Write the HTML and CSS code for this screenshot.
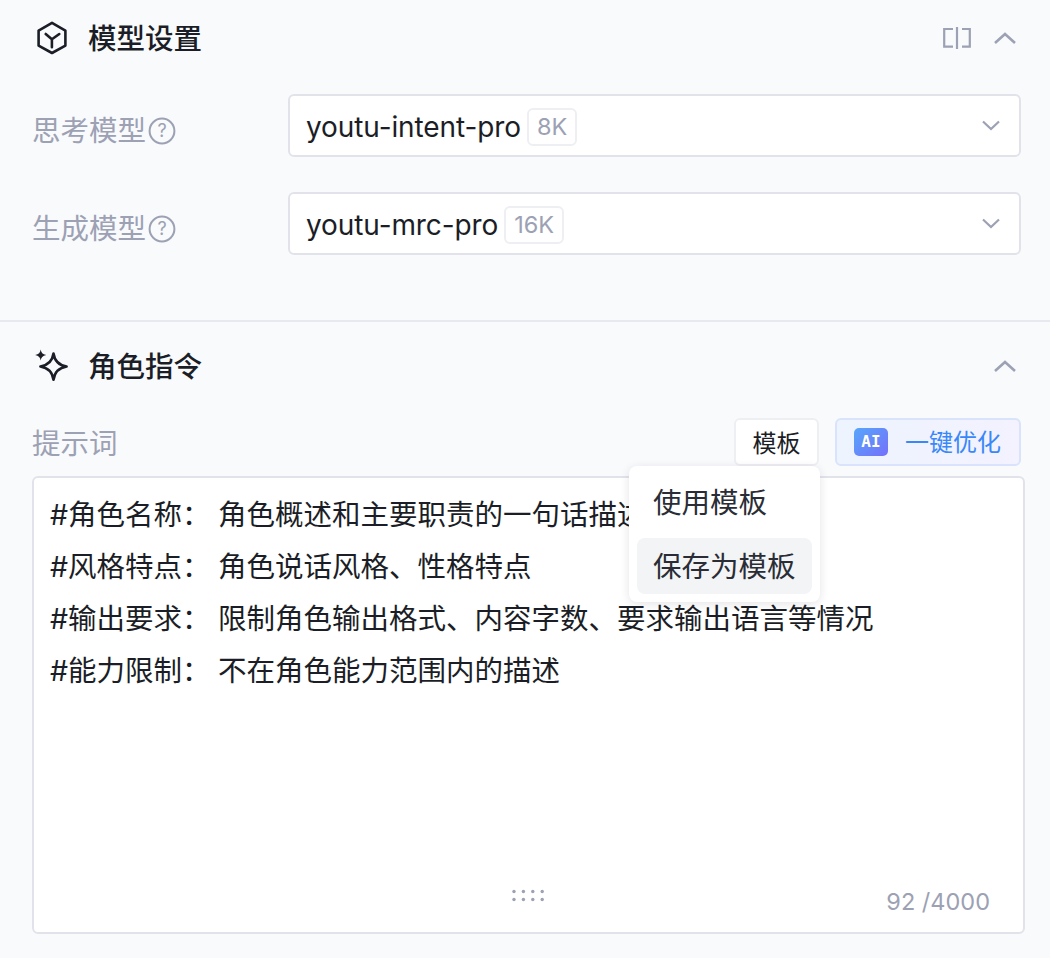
FILE: index.html
```html
<!DOCTYPE html>
<html lang="zh-CN">
<head>
<meta charset="utf-8">
<title>模型设置</title>
<link rel="stylesheet" href="styles.css">
</head>
<body>
<main class="page">
  <section class="model-section">
    <header class="section-head">
      <svg class="head-icon" viewBox="0 0 32 36" width="32" height="36" fill="none" stroke="#1b1e26" stroke-width="2.6" stroke-linejoin="round" stroke-linecap="round"><path d="M17 1.9 L30.4 9.6 V24.6 L17 32 L3.6 24.6 V9.6 Z"/><path d="M10.7 13 L16.9 18.3 L24.3 13 M16.9 18.3 V26.3"/></svg>
      <h2 class="section-title">模型设置</h2>
      <div class="head-actions">
        <svg class="split-icon" viewBox="0 0 28 24" width="28" height="24" fill="none" stroke="#9ca1b3" stroke-width="2.2"><path d="M10 2 H1.2 V19.7 H10 M19 2 H26.8 V19.7 H19"/><path d="M14 0 V22"/></svg>
        <svg class="chev-up" viewBox="0 0 24 14" width="24" height="14" fill="none" stroke="#9ca1b3" stroke-width="2.6"><path d="M2 11 L12 2 L22 11"/></svg>
      </div>
    </header>
    <div class="field-row">
      <div class="field-label"><span>思考模型</span><svg class="help" viewBox="0 0 28 28" width="28" height="28" fill="none"><circle cx="14" cy="14" r="12.4" stroke="#9ca1b3" stroke-width="2"/><text x="14" y="20" text-anchor="middle" class="help-mark">?</text></svg></div>
      <div class="select"><span class="select-value">youtu-intent-pro</span><span class="tag">8K</span><svg class="chev-down" viewBox="0 0 18 11" width="18" height="11" fill="none" stroke="#9ca1b3" stroke-width="2.2"><path d="M1 1.5 L9 9 L17 1.5"/></svg></div>
    </div>
    <div class="field-row">
      <div class="field-label"><span>生成模型</span><svg class="help" viewBox="0 0 28 28" width="28" height="28" fill="none"><circle cx="14" cy="14" r="12.4" stroke="#9ca1b3" stroke-width="2"/><text x="14" y="20" text-anchor="middle" class="help-mark">?</text></svg></div>
      <div class="select"><span class="select-value">youtu-mrc-pro</span><span class="tag">16K</span><svg class="chev-down" viewBox="0 0 18 11" width="18" height="11" fill="none" stroke="#9ca1b3" stroke-width="2.2"><path d="M1 1.5 L9 9 L17 1.5"/></svg></div>
    </div>
  </section>
  <section class="role-section">
    <header class="section-head">
      <svg class="head-icon star-icon" viewBox="0 0 32 36" width="32" height="36" fill="none"><path d="M18.5 4.5 C19.6 12.2 23.6 16.2 31.6 17.5 C23.6 18.8 19.6 22.8 18.5 30.8 C17.4 22.8 13.4 18.8 5.4 17.5 C13.4 16.2 17.4 12.2 18.5 4.5 Z" stroke="#1b1e26" stroke-width="2.6" stroke-linejoin="round"/><path d="M5.7 0.4 C6.1 3.6 7.6 5.2 11.2 6 C7.6 6.8 6.1 8.4 5.7 11.6 C5.3 8.4 3.8 6.8 0.2 6 C3.8 5.2 5.3 3.6 5.7 0.4 Z" fill="#1b1e26"/></svg>
      <h2 class="section-title">角色指令</h2>
      <div class="head-actions">
        <svg class="chev-up" viewBox="0 0 24 14" width="24" height="14" fill="none" stroke="#9ca1b3" stroke-width="2.6"><path d="M2 11 L12 2 L22 11"/></svg>
      </div>
    </header>
    <div class="prompt-bar">
      <span class="prompt-label">提示词</span>
      <div class="prompt-actions">
        <div class="template-wrap">
          <button class="btn-template" type="button">模板</button>
          <div class="menu">
            <div class="menu-item">使用模板</div>
            <div class="menu-item is-hover">保存为模板</div>
          </div>
        </div>
        <button class="btn-optimize" type="button"><span class="ai-badge">AI</span><span class="optimize-text">一键优化</span></button>
      </div>
    </div>
    <div class="editor">
      <p class="line"><span class="key">#角色名称：</span>角色概述和主要职责的一句话描述</p>
      <p class="line"><span class="key">#风格特点：</span>角色说话风格、性格特点</p>
      <p class="line"><span class="key">#输出要求：</span>限制角色输出格式、内容字数、要求输出语言等情况</p>
      <p class="line"><span class="key">#能力限制：</span>不在角色能力范围内的描述</p>
      <div class="editor-foot">
        <svg class="grip" viewBox="0 0 34 14" width="34" height="14" fill="#9ca1b3"><circle cx="2" cy="2.5" r="1.7"/><circle cx="11.4" cy="2.5" r="1.7"/><circle cx="20.8" cy="2.5" r="1.7"/><circle cx="30.2" cy="2.5" r="1.7"/><circle cx="2" cy="10.5" r="1.7"/><circle cx="11.4" cy="10.5" r="1.7"/><circle cx="20.8" cy="10.5" r="1.7"/><circle cx="30.2" cy="10.5" r="1.7"/></svg>
        <span class="count">92 /4000</span>
      </div>
    </div>
  </section>
</main>
</body>
</html>
```

FILE: styles.css
```css
* { box-sizing: border-box; }
html, body { margin: 0; padding: 0; }
body {
  width: 1050px;
  height: 958px;
  overflow: hidden;
  background: #f9fafc;
  color: #1b1e26;
  font-family: Inter, "Noto Sans CJK SC", sans-serif;
  font-size: 28px;
}
.page { display: flex; flex-direction: column; }
.model-section {
  height: 320px;
  padding: 17px 29px 0 32px;
  display: flex;
  flex-direction: column;
}
.role-section {
  border-top: 2px solid #e8e9ef;
  padding: 23px 25px 0 32px;
  display: flex;
  flex-direction: column;
}
.section-head {
  height: 44px;
  display: flex;
  align-items: center;
  gap: 21px;
  flex: none;
}
.head-icon { flex: none; margin-left: 3px; }
.star-icon { overflow: visible; }
.section-title {
  margin: 0;
  font-size: 28.5px;
  font-weight: 500;
  line-height: 44px;
}
.head-actions {
  margin-left: auto;
  margin-right: 4px;
  display: flex;
  align-items: center;
  gap: 22px;
}
.role-section .head-actions { margin-right: 8px; }
.field-row {
  display: flex;
  align-items: center;
  margin-top: 35px;
}
.section-head + .field-row { margin-top: 33px; }
.field-label {
  width: 256px;
  display: flex;
  align-items: center;
  color: #9ca1b3;
  font-size: 28.5px;
  line-height: 44px;
  padding-top: 10px;
  flex: none;
}
.help { margin-left: 2px; }
.select {
  flex: 1;
  height: 63px;
  background: #fff;
  border: 2px solid #e2e3ea;
  border-radius: 6px;
  padding: 2px 19px 0 16px;
  display: flex;
  align-items: center;
  gap: 6px;
}
.select-value { line-height: 40px; letter-spacing: -0.1px; }
.tag {
  height: 38px;
  padding: 0 8px;
  border: 2px solid #eeeff3;
  border-radius: 6px;
  color: #9ca1b3;
  font-size: 23.5px;
  line-height: 34px;
}
.chev-down { margin-left: auto; margin-top: -2px; }
.help-mark { font-size: 18px; fill: #9ca1b3; font-family: Inter, sans-serif; }
.prompt-bar {
  margin-top: 29px;
  height: 48px;
  display: flex;
  align-items: center;
  padding-right: 4px;
  flex: none;
}
.prompt-label { color: #9ca1b3; font-size: 28.5px; line-height: 48px; padding-top: 4px; }
.prompt-actions {
  margin-left: auto;
  display: flex;
  gap: 16px;
}
.template-wrap { position: relative; }
.btn-template, .btn-optimize {
  font: inherit;
  height: 48px;
  border-radius: 6px;
  padding: 0;
  cursor: pointer;
  font-size: 24px;
  line-height: 44px;
}
.btn-template {
  width: 85px;
  background: #fff;
  border: 2px solid #eeeff3;
  color: #1b1e26;
  padding-top: 2px;
}
.btn-optimize {
  width: 186px;
  background: linear-gradient(90deg, #edf4fe, #f3f2fe);
  border: 2px solid #d9e3fc;
  color: #3a88f8;
  display: flex;
  align-items: center;
  padding-left: 17px;
  gap: 17px;
}
.ai-badge {
  width: 34px;
  height: 28px;
  border-radius: 5px;
  background: linear-gradient(135deg, #57a6fa, #7470fb);
  color: #fff;
  font-family: "DejaVu Sans Mono", monospace;
  font-size: 16px;
  font-weight: 700;
  line-height: 28px;
  text-align: center;
}
.optimize-text { line-height: 44px; padding-top: 2px; }
.menu {
  position: absolute;
  top: 48px;
  left: -105px;
  width: 191px;
  height: 136px;
  background: #fff;
  border-radius: 8px;
  padding: 8px;
  box-shadow: 0 2px 10px rgba(30, 35, 60, 0.12);
  z-index: 2;
  display: flex;
  flex-direction: column;
  gap: 8px;
}
.menu-item {
  height: 56px;
  padding: 1px 16px 0;
  border-radius: 8px;
  font-size: 28.5px;
  line-height: 56px;
  white-space: nowrap;
  color: #2a2d35;
  flex: none;
}
.menu-item.is-hover { background: #f3f4f6; }
.editor {
  position: relative;
  margin-top: 10px;
  height: 458px;
  background: #fff;
  border: 2px solid #e2e3ea;
  border-radius: 6px;
  padding: 11px 16px 0;
}
.line {
  margin: 0;
  font-size: 28.5px;
  line-height: 52px;
  white-space: nowrap;
  display: flex;
}
.key { width: 168px; flex: none; }
.editor-foot {
  position: absolute;
  left: 0;
  right: 0;
  bottom: 12px;
  height: 36px;
}
.grip { position: absolute; left: 478px; top: 5px; }
.count {
  position: absolute;
  right: 33px;
  top: 0;
  color: #9ca1b3;
  font-size: 23.5px;
  line-height: 36px;
}
```
